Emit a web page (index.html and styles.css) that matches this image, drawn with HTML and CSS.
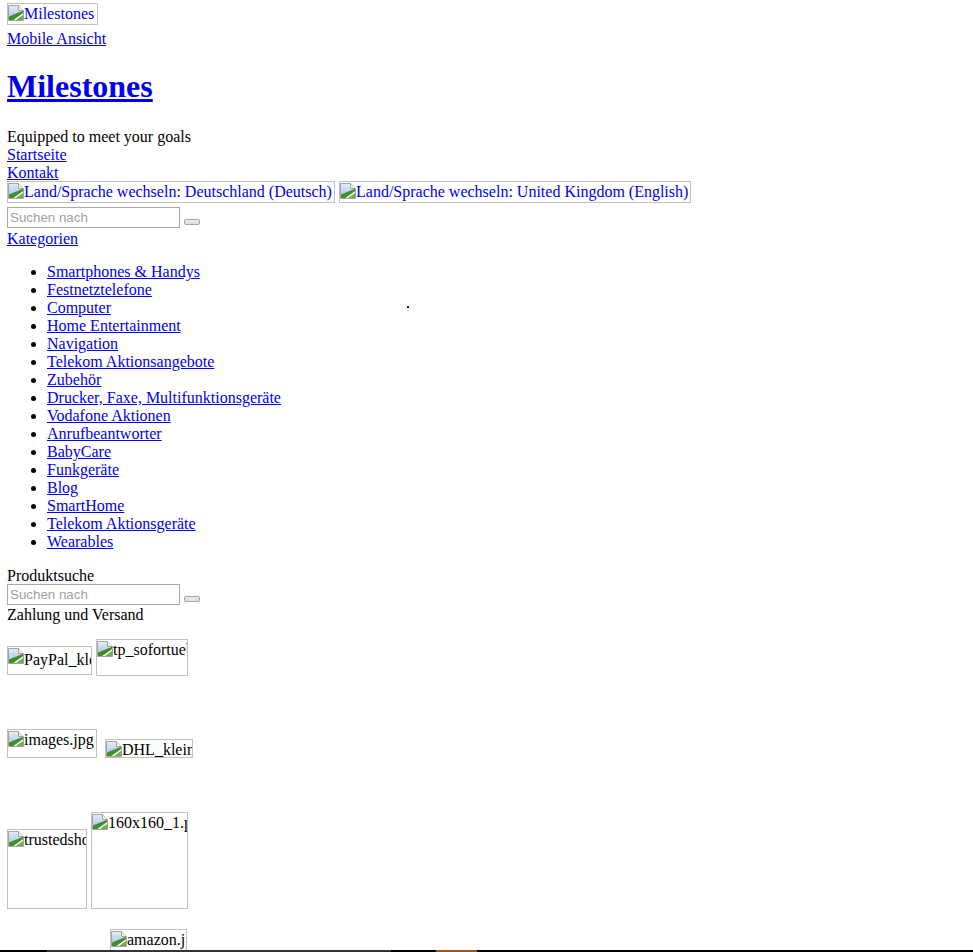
FILE: index.html
```html
<!DOCTYPE html>
<html lang="de">
<head>
<meta charset="utf-8">
<title>Milestones</title>
<link rel="stylesheet" href="styles.css">
</head>
<body>
<svg class="defs" width="0" height="0" aria-hidden="true">
  <defs>
    <linearGradient id="sky" x1="0" y1="0" x2="0" y2="1">
      <stop offset="0" stop-color="#e4edf8"/>
      <stop offset="1" stop-color="#9cbde6"/>
    </linearGradient>
    <symbol id="bi" viewBox="0 0 16 16">
      <path d="M0.5 0.5H10.5L15.5 5.5V15.5H0.5Z" fill="url(#sky)" stroke="#a3a3a3"/>
      <path d="M10.5 0.5V5.5H15.5" fill="#f4f4f4" stroke="#a3a3a3"/>
      <path d="M1 15V11.5L15 5.8V8.2L5.5 15Z" fill="#3f8f27"/>
      <path d="M5.5 15L15 8.2V10L8 15Z" fill="#ffffff"/>
      <path d="M8 15L15 10V15Z" fill="#6fb04b"/>
    </symbol>
  </defs>
</svg>
<div class="page">
  <div class="logo-row">
    <a class="link" href="#"><span class="broken logo"><svg class="bi"><use href="#bi"/></svg><span class="alt">Milestones</span></span></a>
  </div>
  <div class="line"><a class="link" href="#">Mobile Ansicht</a></div>
  <h1 class="site-title"><a class="link" href="#">Milestones</a></h1>
  <div class="line">Equipped to meet your goals</div>
  <div class="line"><a class="link" href="#">Startseite</a></div>
  <div class="line"><a class="link" href="#">Kontakt</a></div>
  <div class="lang-row">
    <a class="link" href="#"><span class="broken lang-de"><svg class="bi"><use href="#bi"/></svg><span class="alt">Land/Sprache wechseln: Deutschland (Deutsch)</span></span></a>
    <a class="link" href="#"><span class="broken lang-en"><svg class="bi"><use href="#bi"/></svg><span class="alt">Land/Sprache wechseln: United Kingdom (English)</span></span></a>
  </div>
  <form class="search-row">
    <input class="search-input" type="text" placeholder="Suchen nach">
    <button class="search-btn" type="button"></button>
  </form>
  <div class="line"><a class="link" href="#">Kategorien</a></div>
  <ul class="cats">
    <li><a class="link" href="#">Smartphones &amp; Handys</a></li>
    <li><a class="link" href="#">Festnetztelefone</a></li>
    <li><a class="link" href="#">Computer</a></li>
    <li><a class="link" href="#">Home Entertainment</a></li>
    <li><a class="link" href="#">Navigation</a></li>
    <li><a class="link" href="#">Telekom Aktionsangebote</a></li>
    <li><a class="link" href="#">Zubehör</a></li>
    <li><a class="link" href="#">Drucker, Faxe, Multifunktionsgeräte</a></li>
    <li><a class="link" href="#">Vodafone Aktionen</a></li>
    <li><a class="link" href="#">Anrufbeantworter</a></li>
    <li><a class="link" href="#">BabyCare</a></li>
    <li><a class="link" href="#">Funkgeräte</a></li>
    <li><a class="link" href="#">Blog</a></li>
    <li><a class="link" href="#">SmartHome</a></li>
    <li><a class="link" href="#">Telekom Aktionsgeräte</a></li>
    <li><a class="link" href="#">Wearables</a></li>
  </ul>
  <div class="line">Produktsuche</div>
  <form class="search-row search-row--side">
    <input class="search-input" type="text" placeholder="Suchen nach">
    <button class="search-btn" type="button"></button>
  </form>
  <div class="line">Zahlung und Versand</div>
  <div class="pay">
    <div class="pay-row row1">
      <span class="broken paypal"><svg class="bi"><use href="#bi"/></svg><span class="alt alt--low">PayPal_klein.jpg</span></span>
      <span class="broken sofort"><svg class="bi"><use href="#bi"/></svg><span class="alt">tp_sofortueberweisung.png</span></span>
    </div>
    <div class="pay-row row2">
      <span class="broken imagesjpg"><svg class="bi"><use href="#bi"/></svg><span class="alt">images.jpg</span></span>
      <span class="broken dhl"><svg class="bi"><use href="#bi"/></svg><span class="alt">DHL_klein.jpg</span></span>
    </div>
    <div class="pay-row row3">
      <span class="broken trusted"><svg class="bi"><use href="#bi"/></svg><span class="alt">trustedshops.png</span></span>
      <span class="broken b160"><svg class="bi"><use href="#bi"/></svg><span class="alt">160x160_1.png</span></span>
    </div>
    <div class="pay-row row4">
      <span class="broken amazon"><svg class="bi"><use href="#bi"/></svg><span class="alt">amazon.jpg</span></span>
    </div>
  </div>
  <a class="pixel-link" href="#"></a>
</div>
<div class="toolbar">
  <span class="seg seg-black1"></span>
  <span class="seg seg-gray"></span>
  <span class="seg seg-black2"></span>
  <span class="seg seg-orange"></span>
  <span class="seg seg-rest"></span>
</div>
</body>
</html>
```
FILE: styles.css
```css
html, body {
  margin: 0;
  padding: 0;
  background: #ffffff;
}

body {
  font-family: "Liberation Serif", "Times New Roman", serif;
  font-size: 16px;
  line-height: 18px;
  color: #000000;
}

.defs {
  position: absolute;
  width: 0;
  height: 0;
  overflow: hidden;
}

.page {
  position: relative;
  padding-left: 7px;
  height: 952px;
  overflow: hidden;
}

.link {
  color: #0000ee;
  text-decoration: underline;
}

/* 18px rows; the 20px line-height drops the glyphs by 1px like the reference */
.line {
  height: 18px;
  line-height: 20px;
  white-space: nowrap;
}

/* broken image placeholders */
.broken {
  display: inline-flex;
  align-items: flex-start;
  box-sizing: border-box;
  border: 1px solid #c0c0c0;
  overflow: hidden;
  white-space: nowrap;
  vertical-align: top;
  color: inherit;
}

.bi {
  flex: none;
  width: 16px;
  height: 16px;
  margin-top: 1px;
}

.alt {
  display: block;
  line-height: 20px;
}

.alt--low {
  padding-top: 3px;
}

.logo-row {
  box-sizing: border-box;
  height: 29px;
  padding-top: 3px;
}

.logo-row .link {
  display: inline-block;
  text-decoration: none;
}

.logo {
  width: 91px;
  height: 22px;
  color: #0000ee;
}

.site-title {
  margin: 21px 0 22px;
  font-size: 32px;
  line-height: 37px;
  font-weight: bold;
}

.lang-row {
  display: flex;
  gap: 4px;
  height: 26px;
}

.lang-row .link {
  text-decoration: none;
}

.lang-de {
  width: 328px;
  height: 22px;
  color: #0000ee;
}

.lang-en {
  width: 352px;
  height: 22px;
  color: #0000ee;
}

.search-row {
  display: flex;
  align-items: flex-start;
  height: 22px;
  margin: 0;
}

.search-row--side {
  height: 21px;
}

.search-input {
  box-sizing: border-box;
  width: 173px;
  height: 21px;
  margin: 0;
  padding: 1px 2px;
  border: 1px solid #a9a9a9;
  font-family: "Liberation Sans", Arial, sans-serif;
  font-size: 13.33px;
  color: #000;
  background: #fff;
}

.search-input::placeholder {
  color: #a0a0a0;
}

.search-btn {
  box-sizing: border-box;
  width: 16px;
  height: 6px;
  margin: 12px 0 0 4px;
  padding: 0;
  border: 1px solid #a6a6a6;
  border-radius: 2px;
  background: linear-gradient(#ededed, #dcdcdc);
}

.cats {
  margin: 15px 0 16px;
  padding-left: 40px;
  list-style: disc;
}

.cats li {
  height: 18px;
  line-height: 20px;
  white-space: nowrap;
}

/* payment logos */
.pay {
  display: flex;
  flex-direction: column;
}

.pay-row {
  display: flex;
  align-items: flex-end;
}

.row1 {
  margin-top: 16px;
  height: 37px;
  gap: 4px;
}

.row2 {
  margin-top: 53px;
  height: 29px;
  gap: 8px;
}

.row3 {
  margin-top: 54px;
  height: 97px;
  gap: 4px;
}

.row4 {
  margin-top: 20px;
  padding-left: 103px;
}

.paypal {
  width: 85px;
  height: 29px;
  margin-bottom: 1px;
}

.sofort {
  width: 92px;
  height: 37px;
}

.imagesjpg {
  width: 90px;
  height: 29px;
}

.dhl {
  width: 88px;
  height: 19px;
}

.trusted {
  width: 80px;
  height: 80px;
}

.b160 {
  width: 97px;
  height: 97px;
}

.amazon {
  width: 77px;
  height: 26px;
}

.pixel-link {
  position: absolute;
  left: 407px;
  top: 306px;
  width: 2px;
  height: 2px;
  background: #0000ee;
}

/* fixed bottom toolbar strip */
.toolbar {
  position: fixed;
  left: 0;
  right: 0;
  bottom: 0;
  height: 2px;
  display: flex;
}

.seg {
  display: block;
  height: 2px;
}

.seg-black1 { width: 47px; background: #000; }
.seg-gray { width: 344px; background: #333333; }
.seg-black2 { width: 45px; background: #000; }
.seg-orange { width: 41px; background: #a0521c; }
.seg-rest { flex: 1; background: #000; }
```
